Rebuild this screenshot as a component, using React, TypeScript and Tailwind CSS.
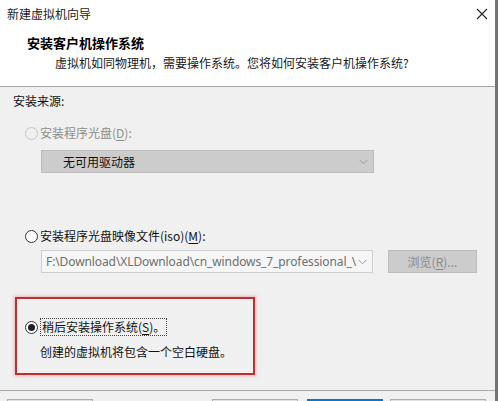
import React from "react"

const cjk = { fontFamily: '"Microsoft YaHei UI", "Noto Sans CJK SC", "Noto Sans", sans-serif' }

const Chevron = ({ color = "#8a8a8a" }: { color?: string }) => (
  <svg width="9" height="6" viewBox="0 0 9 6" fill="none">
    <path d="M0.5 0.8 L4.5 4.8 L8.5 0.8" stroke={color} strokeWidth="1" />
  </svg>
)

const Radio = ({ state }: { state: "disabled" | "off" | "on" }) => {
  if (state === "disabled") {
    return <span className="w-[13px] h-[13px] rounded-full border border-[#c6c6c6] bg-[#f0f0f0] shrink-0" />
  }
  return (
    <span className="w-[13px] h-[13px] rounded-full border border-[#333333] bg-white shrink-0 flex items-center justify-center">
      {state === "on" && <span className="w-[7px] h-[7px] rounded-full bg-[#222222]" />}
    </span>
  )
}

export default function App() {
  return (
    <div
      className="w-[498px] h-[401px] overflow-hidden bg-[#f0f0f0] border-r-[3px] border-[#747474] text-[12px] text-[#111111] flex flex-col"
      style={cjk}
    >
      {/* title bar */}
      <div className="h-[27px] shrink-0 bg-white flex items-center justify-between pl-[7px] pr-[7px]">
        <span className="leading-[18px] text-[#222222]">新建虚拟机向导</span>
        <svg width="12" height="12" viewBox="0 0 12 12">
          <path d="M1 1 L11 11 M11 1 L1 11" stroke="#222" strokeWidth="1.1" />
        </svg>
      </div>

      {/* header */}
      <div className="h-[60px] shrink-0 bg-white border-b border-[#a8a8a8] pt-[7px]">
        <div className="pl-[27px] text-[13px] font-bold leading-[18px] text-black">安装客户机操作系统</div>
        <div className="pl-[55px] mt-[2px] leading-[18px] text-[#1a1a1a]">
          虚拟机如同物理机，需要操作系统。您将如何安装客户机操作系统?
        </div>
      </div>

      {/* body */}
      <div className="flex-1 flex flex-col pt-[5px]">
        <div className="pl-[13px] leading-[18px]">安装来源:</div>

        <div className="mt-[14px] pl-[25px] flex items-center gap-[2px] h-[18px] text-[#8d8d8d]">
          <Radio state="disabled" />
          <span className="leading-[18px]">
            安装程序光盘(<span className="underline underline-offset-2">D</span>):
          </span>
        </div>

        <div className="mt-[8px] ml-[41px] w-[333px] h-[23px] bg-[#cccccc] border border-[#bdbdbd] flex items-center justify-between pl-[21px] pr-[5px]">
          <span className="leading-[18px] text-[#111111]">无可用驱动器</span>
          <Chevron color="#9a9a9a" />
        </div>

        <div className="mt-[54px] pl-[25px] flex items-center gap-[2px] h-[18px]">
          <Radio state="off" />
          <span className="leading-[18px]">
            安装程序光盘映像文件(iso)(<span className="underline underline-offset-2">M</span>):
          </span>
        </div>

        <div className="mt-[5px] ml-[41px] flex items-center gap-[15px]">
          <div className="w-[332px] h-[23px] bg-[#f6f6f6] border border-[#cfcfcf] flex items-center justify-between pl-[4px] pr-[5px] overflow-hidden">
            <span
              className="whitespace-nowrap text-[12px] text-[#6f6f6f] leading-[18px] tracking-[-0.1px]"
              style={{ fontFamily: '"Segoe UI", "Noto Sans", sans-serif' }}
            >
              F:\Download\XLDownload\cn_windows_7_professional_\
            </span>
            <Chevron color="#9a9a9a" />
          </div>
          <div className="w-[89px] h-[23px] bg-[#cccccc] border border-[#bdbdbd] flex items-center justify-center text-[#8a8a8a] leading-[18px]">
            浏览(<span className="underline underline-offset-2">R</span>)...
          </div>
        </div>

        <div className="mt-[24px] ml-[15px] w-[240px] h-[78px] border-2 border-[#b8322f] shadow-[0_0_3px_1px_rgba(230,120,120,0.5)] pt-[19px] pl-[8px]">
          <div className="flex items-center gap-[2px] h-[18px]">
            <Radio state="on" />
            <span className="leading-[16px] border border-dotted border-[#444444] px-[1px]">
              稍后安装操作系统(<span className="underline underline-offset-2">S</span>)。
            </span>
          </div>
          <div className="mt-[7px] pl-[15px] leading-[18px]">创建的虚拟机将包含一个空白硬盘。</div>
        </div>

        <div className="mt-[15px] border-t border-[#a8a8a8] pt-[8px] flex pl-[7px]">
          <div className="w-[86px] h-[23px] bg-[#e1e1e1] border border-[#adadad]" />
          <div className="w-[119px]" />
          <div className="w-[86px] h-[23px] bg-[#e1e1e1] border border-[#adadad]" />
          <div className="w-[9px]" />
          <div className="w-[76px] h-[23px] bg-[#e5f1fb] border-2 border-[#0078d7]" />
          <div className="w-[7px]" />
          <div className="w-[96px] h-[23px] bg-[#e1e1e1] border border-[#adadad]" />
        </div>
      </div>
    </div>
  )
}
